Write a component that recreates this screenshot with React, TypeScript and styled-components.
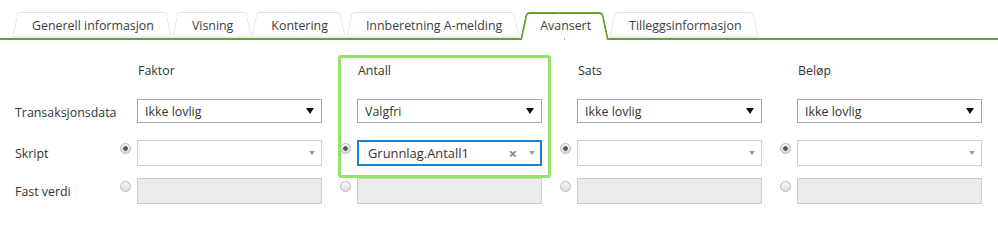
import React from 'react';
import styled, { createGlobalStyle } from 'styled-components';

const GREEN = '#6aa12b';
const HIGHLIGHT = '#96e16b';

const GlobalStyle = createGlobalStyle`
  html, body {
    margin: 0;
    padding: 0;
    background: #fff;
  }
  body {
    color: #333;
    font-family: 'Open Sans', 'Liberation Sans', sans-serif;
    font-size: 12.4px;
  }
`;

const Page = styled.div`
  height: 220px;
  overflow: hidden;
  position: relative;
  width: 998px;
`;

const TabStrip = styled.ul`
  align-items: flex-end;
  border-bottom: 2px solid ${GREEN};
  display: flex;
  list-style: none;
  margin: 0;
  padding: 12px 0 0 12px;
`;

const Tab = styled.li<{ $active?: boolean }>`
  color: #3d3d3d;
  cursor: pointer;
  height: ${(p) => (p.$active ? '28px' : '26px')};
  line-height: 27px;
  margin-bottom: ${(p) => (p.$active ? '-2px' : '0')};
  padding: 0 18px 0 20px;
  position: relative;
  white-space: nowrap;
  z-index: ${(p) => (p.$active ? 2 : 1)};

  &::before,
  &::after {
    background: #fff;
    border: ${(p) => (p.$active ? `2px solid ${GREEN}` : '1px solid #dce3e8')};
    border-bottom: none;
    bottom: 0;
    content: '';
    position: absolute;
    top: 0;
    transform-origin: bottom;
    z-index: -1;
  }

  &::before {
    border-radius: 4px 0 0 0;
    border-right: none;
    box-shadow: ${(p) => (p.$active ? 'none' : 'inset 1px -4px 3px -3px rgba(0, 0, 0, 0.12)')};
    left: 0;
    right: 50%;
    transform: skewX(-12deg);
  }

  &::after {
    border-left: none;
    border-radius: 0 4px 0 0;
    box-shadow: ${(p) => (p.$active ? 'none' : 'inset -1px -4px 3px -3px rgba(0, 0, 0, 0.12)')};
    left: 50%;
    right: 0;
    transform: skewX(12deg);
  }
`;

const Form = styled.div`
  padding: 20px 0 0 15px;
`;

const Row = styled.div<{ $top: number; $height: number }>`
  align-items: center;
  display: grid;
  grid-template-columns: 102px repeat(4, 20px 185px 15px);
  height: ${(p) => p.$height}px;
  margin-top: ${(p) => p.$top}px;
`;

const RowLabel = styled.div<{ $offset?: number }>`
  padding-top: ${(p) => p.$offset ?? 0}px;
  white-space: nowrap;
`;

const ColumnTitle = styled.div`
  padding-left: 1px;
`;

const Cell = styled.div``;

const Radio = styled.span<{ $checked?: boolean }>`
  align-self: start;
  background: ${(p) =>
    p.$checked
      ? 'radial-gradient(circle, #5a5a5a 0 2px, transparent 2.6px), linear-gradient(#f4f4f4, #d9d9d9)'
      : 'linear-gradient(#f7f7f7, #dedede)'};
  border: 1px solid #b8b8b8;
  border-radius: 50%;
  box-sizing: border-box;
  height: 11px;
  margin: 3px 0 0 3px;
  width: 11px;
`;

type SelectVariant = 'strong' | 'light' | 'focus' | 'disabled';

const BORDERS: Record<SelectVariant, string> = {
  strong: '1px solid #a6a6a6',
  light: '1px solid #cfcfcf',
  focus: '2px solid #1c84d4',
  disabled: '1px solid #cccccc',
};

const SelectBox = styled.div<{ $variant: SelectVariant }>`
  align-items: center;
  background: ${(p) => (p.$variant === 'disabled' ? '#ebebeb' : '#fff')};
  border: ${(p) => BORDERS[p.$variant]};
  box-sizing: border-box;
  display: flex;
  font-size: ${(p) => (p.$variant === 'focus' ? '12.9px' : '12.4px')};
  height: 100%;
  padding: ${(p) => (p.$variant === 'focus' ? '0 5px 0 9px' : '0 6px 0 7px')};
`;

const SelectValue = styled.span`
  flex: 1;
  overflow: hidden;
  white-space: nowrap;
`;

const Caret = styled.span<{ $strong?: boolean }>`
  border-left: ${(p) => (p.$strong ? 4 : 3)}px solid transparent;
  border-right: ${(p) => (p.$strong ? 4 : 3)}px solid transparent;
  border-top: ${(p) => (p.$strong ? '6px solid #111' : '4px solid #a0a0a0')};
  height: 0;
  margin-right: ${(p) => (p.$strong ? 1 : 0)}px;
  width: 0;
`;

const Clear = styled.span`
  color: #8a8a8a;
  font-size: 15px;
  font-weight: 700;
  line-height: 1;
  margin-right: 12px;
`;

const Highlight = styled.div`
  border: 3px solid ${HIGHLIGHT};
  border-radius: 3px;
  box-sizing: border-box;
  height: 123px;
  left: 338px;
  pointer-events: none;
  position: absolute;
  top: 55px;
  width: 213px;
`;

const TABS = [
  'Generell informasjon',
  'Visning',
  'Kontering',
  'Innberetning A-melding',
  'Avansert',
  'Tilleggsinformasjon',
];

interface Column {
  title: string;
  transaction: string;
  script?: string;
  focused?: boolean;
}

const DATA: Column[] = [
  { title: 'Faktor', transaction: 'Ikke lovlig' },
  { title: 'Antall', transaction: 'Valgfri', script: 'Grunnlag.Antall1', focused: true },
  { title: 'Sats', transaction: 'Ikke lovlig' },
  { title: 'Beløp', transaction: 'Ikke lovlig' },
];

const App: React.FC = () => {
  return (
    <Page>
      <GlobalStyle />
      <TabStrip>
        {TABS.map((tab) => (
          <Tab key={tab} $active={tab === 'Avansert'}>
            {tab}
          </Tab>
        ))}
      </TabStrip>
      <Form>
        <Row $top={0} $height={20}>
          <RowLabel />
          {DATA.map((col) => (
            <React.Fragment key={col.title}>
              <Cell />
              <ColumnTitle>{col.title}</ColumnTitle>
              <Cell />
            </React.Fragment>
          ))}
        </Row>
        <Row $top={19} $height={24}>
          <RowLabel $offset={3}>Transaksjonsdata</RowLabel>
          {DATA.map((col) => (
            <React.Fragment key={col.title}>
              <Cell />
              <SelectBox $variant="strong">
                <SelectValue>{col.transaction}</SelectValue>
                <Caret $strong />
              </SelectBox>
              <Cell />
            </React.Fragment>
          ))}
        </Row>
        <Row $top={17} $height={26}>
          <RowLabel>Skript</RowLabel>
          {DATA.map((col) => (
            <React.Fragment key={col.title}>
              <Radio $checked />
              <SelectBox $variant={col.focused ? 'focus' : 'light'}>
                <SelectValue>{col.script ?? ''}</SelectValue>
                {col.script && <Clear>×</Clear>}
                <Caret />
              </SelectBox>
              <Cell />
            </React.Fragment>
          ))}
        </Row>
        <Row $top={12} $height={26}>
          <RowLabel>Fast verdi</RowLabel>
          {DATA.map((col) => (
            <React.Fragment key={col.title}>
              <Radio />
              <SelectBox $variant="disabled" />
              <Cell />
            </React.Fragment>
          ))}
        </Row>
      </Form>
      <Highlight />
    </Page>
  );
};

export default App;
